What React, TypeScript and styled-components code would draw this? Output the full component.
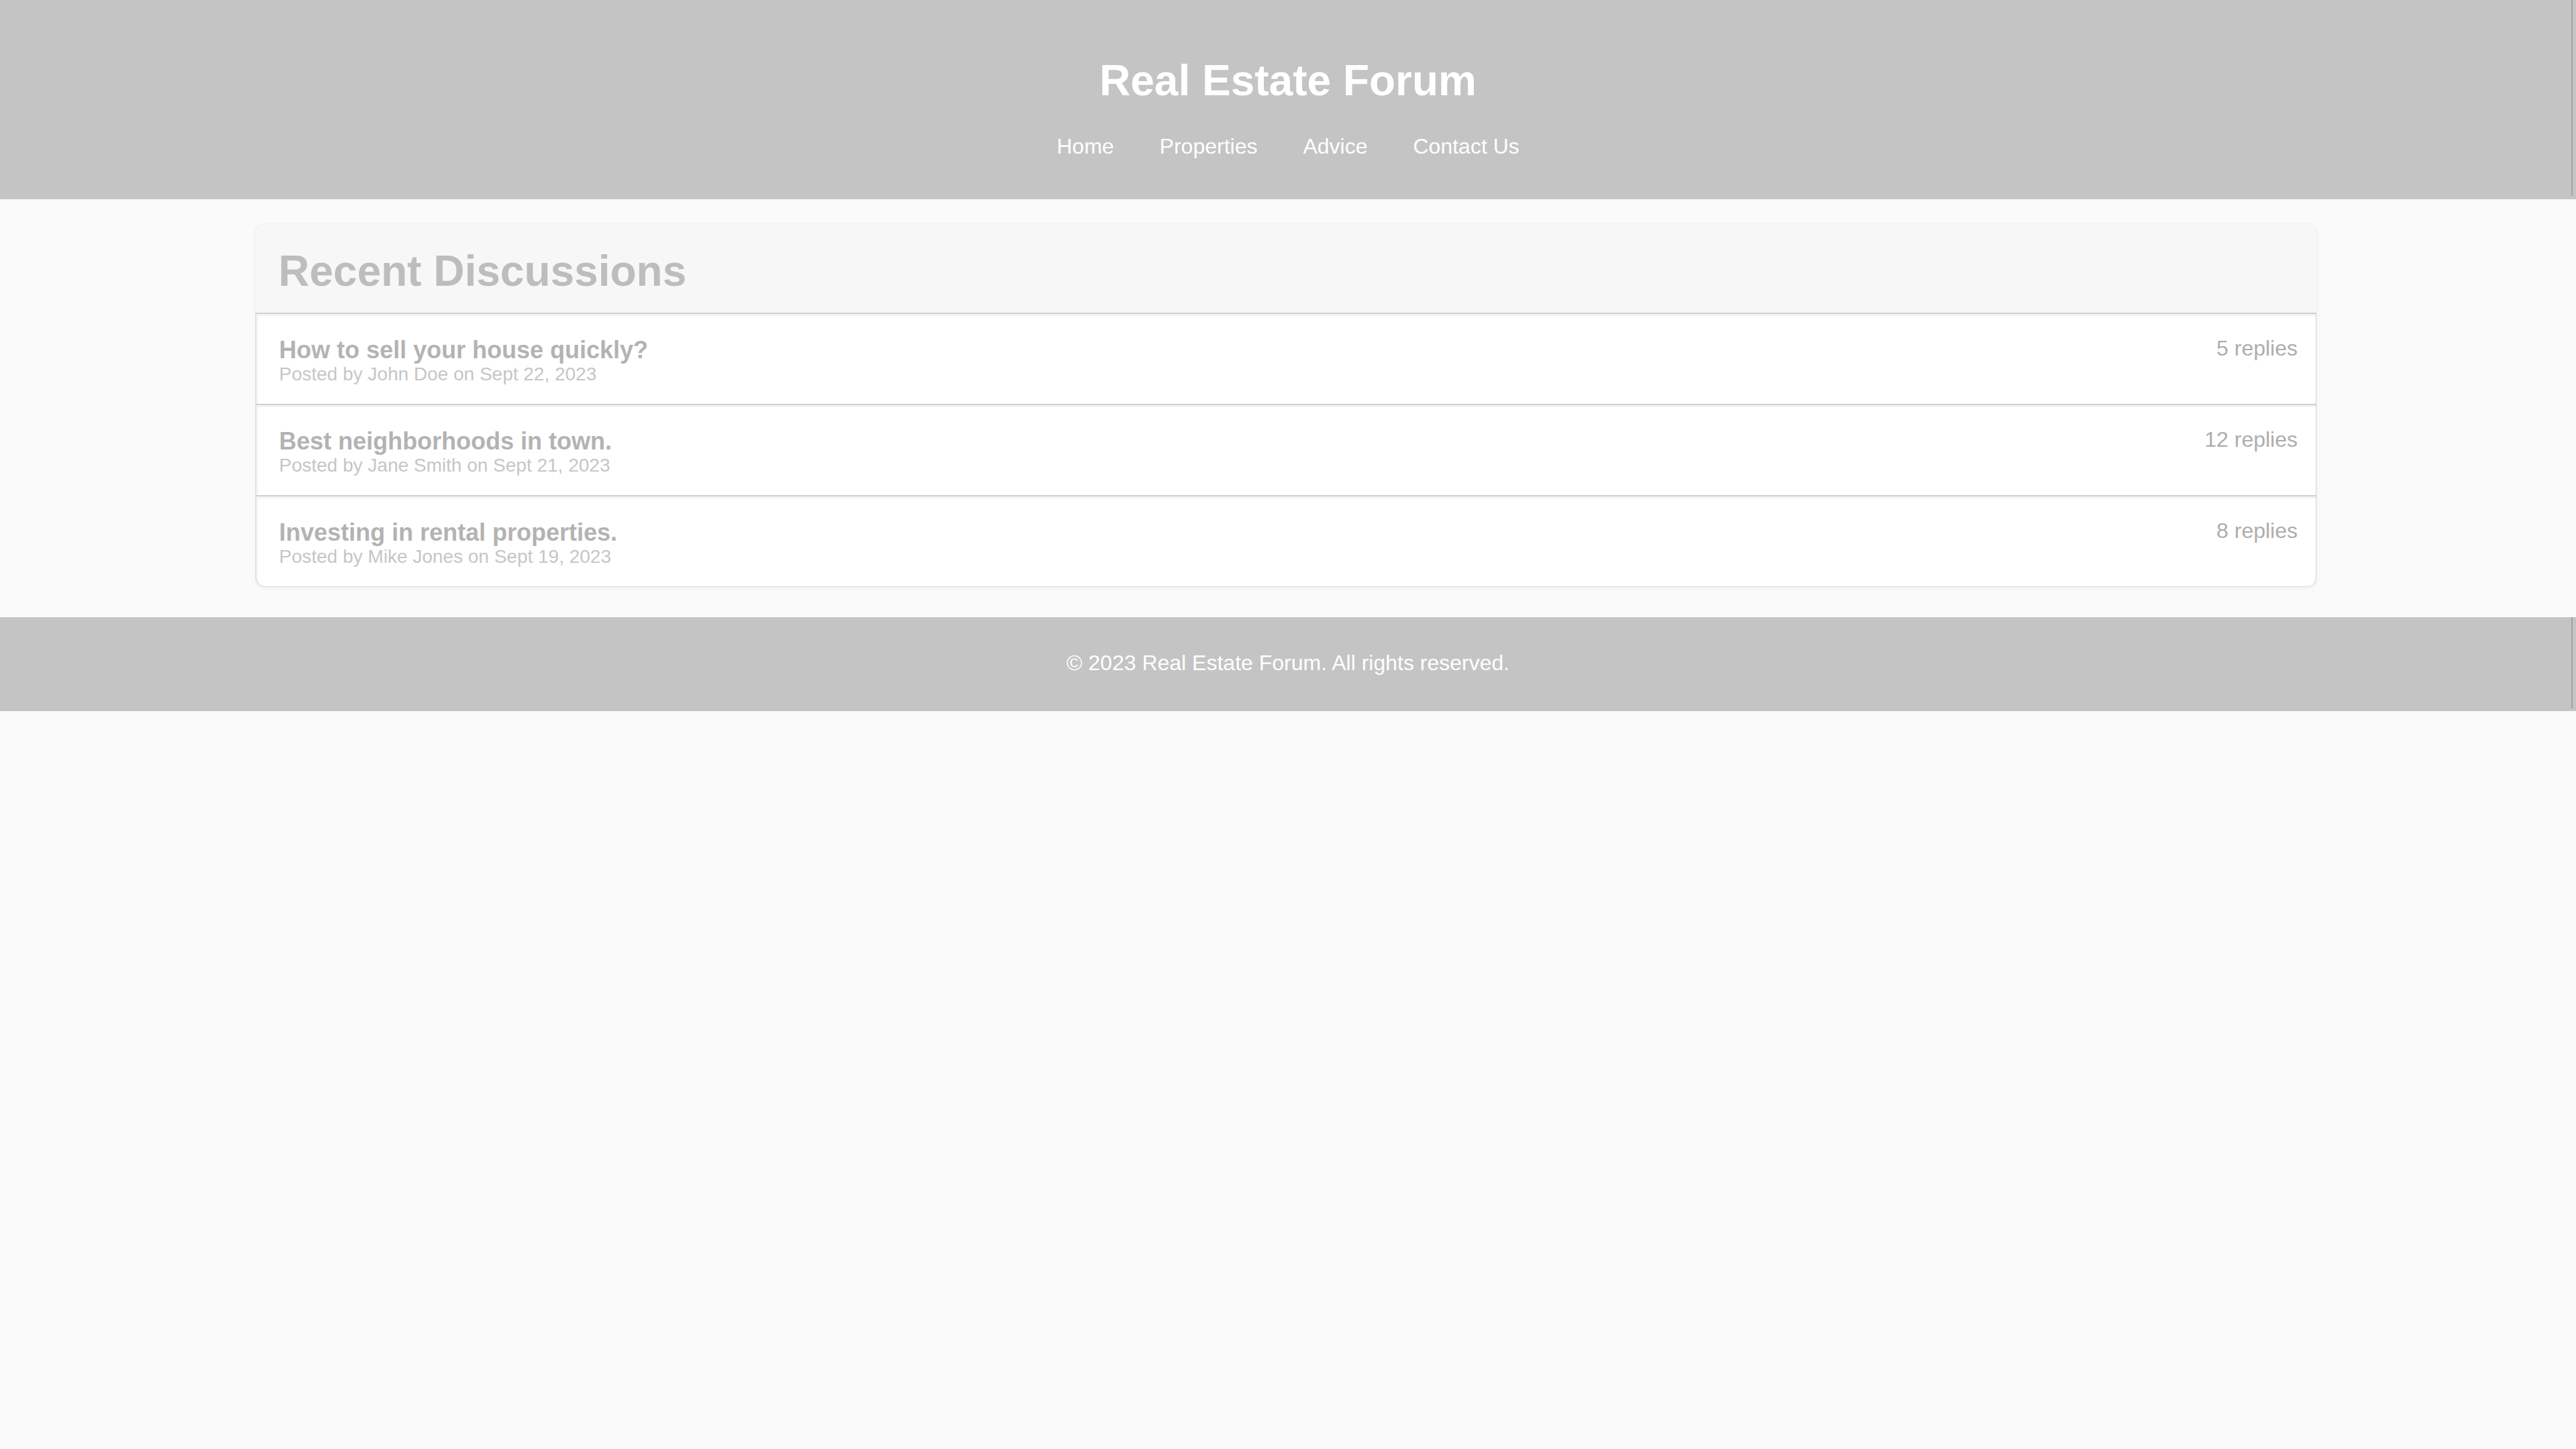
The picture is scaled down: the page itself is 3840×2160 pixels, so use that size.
import { createGlobalStyle } from 'styled-components'
import styled from 'styled-components'

type Discussion = {
  id: number
  title: string
  author: string
  date: string
  replies: number
}

const discussions: Discussion[] = [
  { id: 1, title: 'How to sell your house quickly?', author: 'John Doe', date: 'Sept 22, 2023', replies: 5 },
  { id: 2, title: 'Best neighborhoods in town.', author: 'Jane Smith', date: 'Sept 21, 2023', replies: 12 },
  { id: 3, title: 'Investing in rental properties.', author: 'Mike Jones', date: 'Sept 19, 2023', replies: 8 }
]

const navLinks = ['Home', 'Properties', 'Advice', 'Contact Us']

const GlobalStyle = createGlobalStyle`
  html, body {
    margin: 0;
    padding: 0;
    background: #fafafa;
    font-family: "Liberation Sans", Arial, sans-serif;
    min-height: 100vh;
  }
`

// thin darker line near the right edge of the grey bars, as in the shot
const edgeLine = `linear-gradient(to left, transparent 5px, #a2a2a2 5px, #a2a2a2 7px, transparent 7px)`

const Header = styled.header`
  background: ${edgeLine} no-repeat, #c4c4c4;
  background-size: 100% calc(100% - 5px), auto;
  padding: 83px 0 60px;
  text-align: center;
  color: #ffffff;
`

const SiteTitle = styled.h1`
  margin: 0 0 43px;
  font-size: 64px;
  line-height: 74px;
  font-weight: 700;
`

const Nav = styled.nav`
  display: flex;
  justify-content: center;
  gap: 68px;
`

const NavLink = styled.a`
  font-size: 32px;
  line-height: 37px;
  color: #ffffff;
  text-decoration: none;
`

const Card = styled.section`
  margin: 36px 386px 44px 380px;
  background: #f7f7f7;
  border: 1px solid #f0f0f0;
  border-radius: 14px;
  box-shadow: 0 2px 6px rgba(0, 0, 0, 0.03);
  overflow: hidden;
`

const CardHeader = styled.div`
  padding: 33px 34px 25px;
  border-bottom: 2px solid #d2d2d2;
`

const CardTitle = styled.h2`
  margin: 0;
  font-size: 64px;
  line-height: 74px;
  font-weight: 700;
  color: #bdbdbd;
`

const Row = styled.div<{ $last?: boolean }>`
  display: flex;
  align-items: flex-start;
  justify-content: space-between;
  background: #ffffff;
  padding: 33px 27px 28px 34px;
  border-left: 1px solid #d6d6d6;
  border-right: 1px solid #d6d6d6;
  border-bottom: ${(p) => (p.$last ? '1px solid #dcdcdc' : '2px solid #cfcfcf')};
  border-radius: ${(p) => (p.$last ? '0 0 14px 14px' : '0')};
  box-shadow: inset 0 3px 0 #f4f4f4, inset 3px 0 0 #f7f7f7;
`

const RowMain = styled.div`
  display: flex;
  flex-direction: column;
`

const RowTitle = styled.div`
  font-size: 36px;
  line-height: 41px;
  font-weight: 700;
  color: #b3b3b3;
`

const RowMeta = styled.div`
  font-size: 28px;
  line-height: 32px;
  color: #c6c6c6;
`

const Replies = styled.div`
  font-size: 32px;
  line-height: 37px;
  color: #adadad;
`

const Footer = styled.footer`
  background: ${edgeLine} no-repeat, #c4c4c4;
  background-size: 100% calc(100% - 4px), auto;
  padding: 50px 0 53px;
  text-align: center;
  font-size: 32px;
  line-height: 37px;
  color: #ffffff;
`

export default function App() {
  return (
    <>
      <GlobalStyle />
      <Header>
        <SiteTitle>Real Estate Forum</SiteTitle>
        <Nav>
          {navLinks.map((link) => (
            <NavLink key={link} href="#">
              {link}
            </NavLink>
          ))}
        </Nav>
      </Header>
      <Card>
        <CardHeader>
          <CardTitle>Recent Discussions</CardTitle>
        </CardHeader>
        {discussions.map((d, i) => (
          <Row key={d.id} $last={i === discussions.length - 1}>
            <RowMain>
              <RowTitle>{d.title}</RowTitle>
              <RowMeta>
                Posted by {d.author} on {d.date}
              </RowMeta>
            </RowMain>
            <Replies>{d.replies} replies</Replies>
          </Row>
        ))}
      </Card>
      <Footer>© 2023 Real Estate Forum. All rights reserved.</Footer>
    </>
  )
}
